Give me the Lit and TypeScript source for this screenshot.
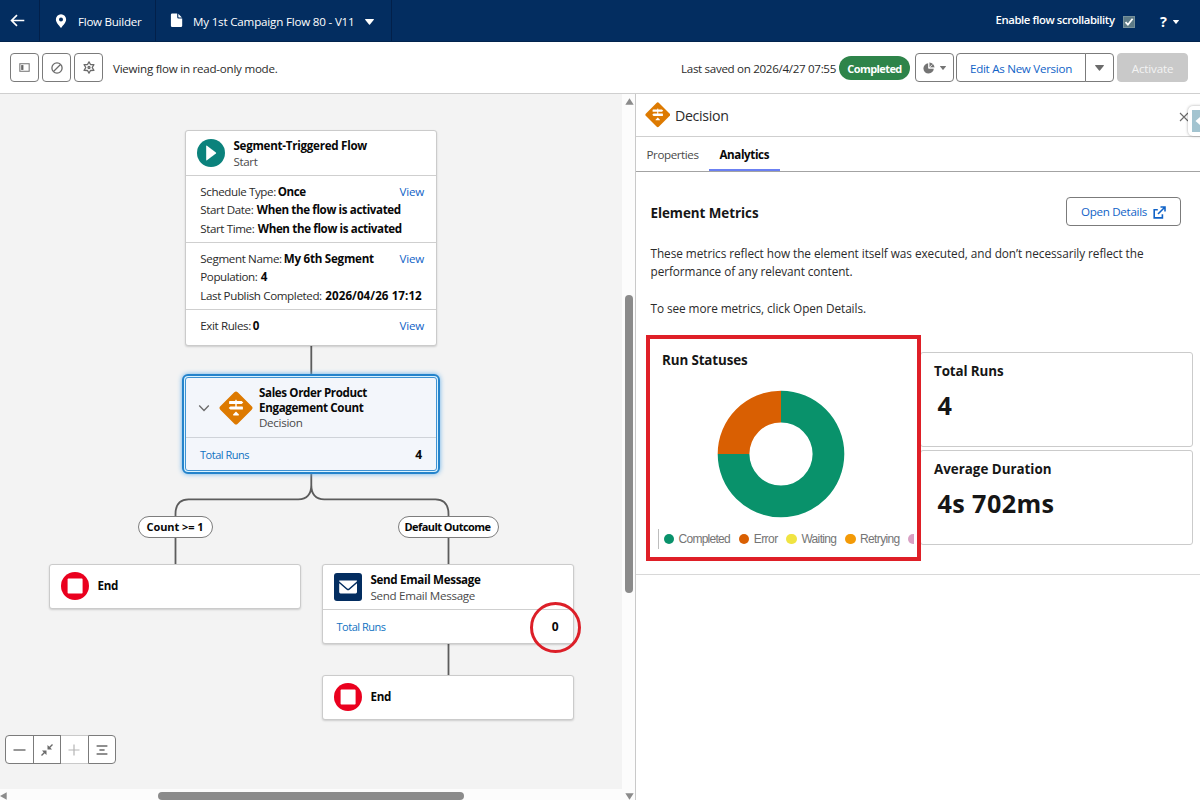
import { LitElement, html, css } from "lit";
import { customElement, property } from "lit/decorators.js";

/** A single line of text whose tracking is tuned so that it takes `w` pixels. */
@customElement("fit-text")
class FitText extends LitElement {
  static styles = css`
    :host { display: inline-block; white-space: pre; }
  `;
  @property() text = "";
  @property({ type: Number }) w = 0;
  render() {
    return html`<span>${this.text}</span>`;
  }
  updated() {
    const span = this.renderRoot.querySelector("span")!;
    span.style.letterSpacing = "0";
    const natural = span.getBoundingClientRect().width;
    span.style.letterSpacing = ((this.w - natural) / this.text.length).toFixed(3) + "px";
  }
}

const t = (text: string, w: number, cls = "") =>
  html`<fit-text class=${cls} .text=${text} .w=${w}></fit-text>`;

const decisionIcon = (size: number) => html`<svg width=${size} height=${size} viewBox="0 0 34 34">
  <rect x="4.7" y="4.7" width="24.6" height="24.6" rx="2.4" transform="rotate(45 17 17)" fill="#dd7a01" />
  <g fill="#fff">
    <rect x="16.3" y="8.8" width="1.4" height="8" />
    <path d="M10.800 9.900h11.800l1.700 1.600-1.700 1.600H10.800q-.7 0-.7-.7v-1.800q0-.7.7-.7z" />
    <path d="M23.200 15.400H11.400l-1.700 1.600 1.700 1.600h11.800q.7 0 .7-.7v-1.800q0-.7-.7-.7z" />
    <path d="M17 20.600l2.900 2.900q.3.900-.6.900h-4.600q-.9 0-.6-.9z" />
  </g>
</svg>`;

const endIcon = html`<svg width="28" height="28" viewBox="0 0 28 28">
  <circle cx="14" cy="14" r="14" fill="#ea001e" />
  <rect x="6.600" y="6.600" width="15" height="15" rx=".8" fill="#fff" />
</svg>`;

const caret = (w: number, h: number, color: string) => html`<svg width=${w} height=${h} viewBox="0 0 10 7" preserveAspectRatio="none">
  <path d="M.6 0h8.800q.8.200.4.800L5.500 6.500q-.5.600-1 0L.2.800Q-.2.200.6 0z" fill=${color} />
</svg>`;

const LEGEND: [string, number, string][] = [
  ["Completed", 51.500, "l1"],
  ["Error", 24, "l2"],
  ["Waiting", 35, "l3"],
  ["Retrying", 39.500, "l4"],
];

@customElement("app-root")
class AppRoot extends LitElement {
  static styles = css`
    :host {
      display: flex; flex-direction: column; width: 1200px; height: 800px; overflow: hidden;
      background: #fff; color: #2b2b2b; position: relative;
      font-family: "Open Sans", "Noto Sans", sans-serif; font-size: 11.6px; line-height: 18.5px;
    }
    * { box-sizing: border-box; }
    svg { display: block; flex: none; }
    b, .b { font-weight: 700; color: #080808; }

    .top { height: 42px; flex: none; display: flex; background: #032d60; color: #fff; border-bottom: 1px solid #02244d; }
    .top fit-text { padding-top: 3px; }
    .cell { display: flex; align-items: center; border-right: 1px solid #02204a; height: 41px; }
    .c1 { width: 40px; padding-left: 10px; }
    .c2 { width: 116px; padding-left: 15px; gap: 11px; }
    .c3 { width: 236px; padding-left: 14px; gap: 10px; }
    .c3 svg:last-child { margin: 2px 0 0 0.5px; }
    .right { margin-left: auto; display: flex; align-items: center; padding-right: 21px; }
    .scrolltxt { font-weight: 600; margin: 0 8px 4px 0; font-size: 11.3px; }
    .check { width: 12px; height: 12px; background: #5d7a86; border: 1px solid #76909a; margin-top: 3px; }
    .help { font-weight: 700; font-size: 14.5px; margin: 3px 6px 0 25.500px; line-height: 20px; }
    .right > svg { margin-top: 2px; }

    .bar { height: 52px; flex: none; display: flex; align-items: center; padding: 0 12px 0 10px; border-bottom: 1px solid #cfcfcf; }
    .bar fit-text { padding-top: 3px; }
    .btn { height: 29px; border: 1px solid #7b7b7b; border-radius: 4px; background: #fff; display: flex; align-items: center; justify-content: center; }
    .sq { width: 29px; margin-right: 3px; }
    .view { margin-left: 7px; }
    .saved { margin-left: auto; }
    .badge { height: 24px; width: 71px; margin: 0 5px 0 3px; border-radius: 12px; background: #2e844a; color: #fff; font-weight: 700; display: flex; align-items: center; justify-content: center; font-size: 11px; }
    .pie { width: 39px; gap: 5px; margin-right: 2px; }
    .edit { width: 130px; border-radius: 4px 0 0 4px; }
    .edit, .link { color: #1163c7; }
    .drop { width: 29px; border-radius: 0 4px 4px 0; margin-left: -1px; margin-right: 3px; }
    .drop svg { margin-top: 1px; }
    .act { width: 71px; background: #c9c9c9; border-color: #c9c9c9; color: #f3f3f3; }

    .main { flex: 1; display: flex; min-height: 0; }
    .left { width: 636px; display: grid; grid-template: 1fr 11px / 1fr 13px; border-right: 1px solid #c9c9c9; background: #fcfcfc; }
    .vbar { grid-row: 1 / 3; grid-column: 2; display: flex; flex-direction: column; align-items: center; padding: 4px 0 0 1px; }
    .vthumb { width: 8px; height: 298px; border-radius: 4px; background: #8b8b8b; margin-top: 190px; }
    .vbar svg:last-child { margin-top: auto; }
    .hbar { grid-row: 2; grid-column: 1; display: flex; align-items: flex-start; padding-top: 3px; }
    .hthumb { width: 306px; height: 8px; border-radius: 4px; background: #8b8b8b; margin-left: 151px; }
    .canvas { position: relative; background: #f3f3f3; overflow: hidden; grid-row: 1; grid-column: 1; }
    .wires { position: absolute; left: 0; top: 0; }
    .node { position: absolute; width: 252px; background: #fff; border: 1px solid #cbcbcb; border-radius: 3px; box-shadow: 0 1px 2px rgba(0,0,0,.16); }
    .n-start { left: 185px; top: 36px; height: 216px; }
    .n-end1 { left: 49px; top: 470px; height: 45px; }
    .n-mail { left: 322px; top: 470px; height: 80px; }
    .n-end2 { left: 322px; top: 581px; height: 45px; }
    .n-dec { left: 182px; top: 280px; width: 258px; height: 100px; padding: 1px; background: #d9f3ff; border: 2px solid #2483cb; border-radius: 6px; box-shadow: 0 0 5px #66b0ea; }
    .inner { height: 94px; background: #f3f6fb; border: 1px solid #3f92d2; border-radius: 3px; }
    .head { display: flex; align-items: center; padding-left: 11px; height: 45px; gap: 9px; border-bottom: 1px solid #cfcfcf; line-height: 16px; }
    .head .names { padding-top: 1px; margin-left: -.5px; }
    .head.solo { border: 0; height: 42px; gap: 8.500px; }
    .names { display: flex; flex-direction: column; }
    .sub { color: #4a4a4a; }
    .sec { padding: 6.500px 12px 4px 14.300px; border-bottom: 1px solid #cfcfcf; }
    .sec:last-child { border: 0; }
    .row { display: flex; height: 18.500px; }
    .g2 { margin-left: 2px; } .g3 { margin-left: 3.500px; }
    .row .link { margin-left: auto; }
    .dhead { display: flex; height: 60px; border-bottom: 1px solid #cfd3d9; line-height: 14.500px; align-items: center; padding-left: 12px; }
    .dhead .names { margin-left: 6px; padding-top: 2px; }
    .dhead .sub { line-height: 16px; }
    .dhead .chev { margin-right: 9px; }
    .runs { display: flex; justify-content: space-between; align-items: center; color: #0f72c2; font-size: 11px; }
    .runs b { font-size: 12px; }
    .r1 { height: 32px; padding: 2px 14px 0 14px; }
    .r2 { height: 34px; padding: 0 14.500px 0 13.500px; }
    .pill { position: absolute; top: 422px; height: 22px; border: 1px solid #7d7d7d; border-radius: 11px; background: #fff; display: flex; align-items: center; justify-content: center; font-weight: 700; color: #080808; font-size: 11px; padding: 1px 1px 0 0; }
    .p1 { left: 138px; width: 75px; } .p2 { left: 397.500px; width: 101px; }
    .ring { position: absolute; left: 530px; top: 508px; width: 51px; height: 51px; border: 3px solid #dc1f28; border-radius: 50%; }
    .zoom { position: absolute; left: 5px; top: 641px; display: flex; }
    .zoom .btn { width: 28.500px; margin-right: -1px; border-radius: 0; }
    .zoom .btn:first-child { border-radius: 4px 0 0 4px; }
    .zoom .btn:last-child { border-radius: 0 4px 4px 0; margin: 0; }
    .zoom .off { border-color: #c9c9c9 transparent #c9c9c9 transparent; }
    .zoom .over { z-index: 1; }

    .panel { flex: 1; min-width: 0; display: flex; flex-direction: column; }
    .ph { height: 43px; flex: none; display: flex; align-items: center; border-bottom: 1px solid #cfcfcf; padding: 0 0 0 8.500px; font-size: 14.200px; gap: 5px; }
    .ph fit-text { padding-top: 2px; }
    .ph .x { margin: 4px 11px 0 auto; }
    .tabs { height: 35px; flex: none; display: flex; border-bottom: 1.500px solid #a3a3a3; padding-left: 10.500px; color: #4a4a4a; }
    .tab { padding-top: 9px; }
    .tab.on { margin-left: 10px; padding: 9px 11px 0; width: 71px; border-bottom: 2px solid #6b80f2; color: #080808; font-weight: 700; }
    .body { height: 403px; border-bottom: 1.500px solid #d8d8d8; padding: 25px 7px 0 10px; }
    .bh { display: flex; justify-content: space-between; padding: 0 12px 0 4.500px; }
    .h { font-weight: 700; color: #161616; font-size: 13.400px; }
    .bh .h { padding-top: 6.500px; }
    .od { width: 115px; gap: 6px; padding-top: 1px; }
    .para { padding: 17.500px 4.500px 0; display: flex; flex-direction: column; font-size: 11.800px; }
    .gap { margin-top: 18.500px; }
    .grid { display: flex; margin-top: 17.500px; }
    .status { width: 275px; height: 226px; border: 4px solid #df1f27; padding: 12px 3px 0 8px; flex: none; display: flex; flex-direction: column; z-index: 1; background: #fff; }
    .status .h { padding-left: 4px; }
    .donut { margin: 20px 0 0 59px; }
    .legend { display: flex; align-items: center; margin-top: 11.500px; height: 20px; border-left: 1.500px solid #bdbdbd; overflow: hidden; font: 12px "Liberation Sans", sans-serif; color: #757575; padding-left: 4.500px; }
    .dot { width: 10.500px; height: 10.500px; border-radius: 50%; margin-right: 4.500px; flex: none; }
    .l1 { background: #09926b; } .l2 { background: #d95f02; } .l3 { background: #f0e442; } .l4 { background: #f39a07; } .l5 { background: #d9a0c3; }
    .legend fit-text { margin-right: 8.700px; flex: none; }
    .cards { flex: 1; padding-top: 17px; display: flex; flex-direction: column; gap: 3px; }
    .card { height: 95px; border: 1px solid #cbcbcb; border-radius: 3px; padding: 9px 13px; margin-left: -1px; display: flex; flex-direction: column; }
    .big { font-weight: 700; font-size: 25.200px; line-height: 32px; margin: 8px 0 0 3.500px; color: #161616; }
    .side { position: absolute; left: 1188px; top: 106px; width: 20px; height: 30px; background: #fff; border-radius: 5px; box-shadow: 0 0 3px rgba(0,0,0,.35); padding: 4px; }
    .side div { width: 16px; height: 22px; background: #a3c4d0; }
  `;

  row(a: string, aw: number, b: string, bw: number, link = false) {
    return html`<div class="row">${t(a, aw)}${t(b, bw, link ? "b g2" : "b g3")}${link ? t("View", 24.500, "link") : ""}</div>`;
  }

  render() {
    return html`
      <div class="top">
        <div class="cell c1"><svg width="15" height="14" viewBox="0 0 15 14"><path d="M14.300 6.500H2M7 1.200L1.600 6.500 7 11.800" fill="none" stroke="#fff" stroke-width="1.700" /></svg></div>
        <div class="cell c2"><svg width="12" height="14" viewBox="0 0 12 14"><path fill-rule="evenodd" d="M6 .2a5.100 5.100 0 0 1 5.100 5.200C11.100 8.600 7.700 11.300 6.500 13.500q-.5.600-1 0C4.300 11.300.9 8.600.9 5.400A5.100 5.100 0 0 1 6 .2zM6 3.400a2 2 0 1 0 0 4 2 2 0 0 0 0-4z" fill="#fff" /></svg>${t("Flow Builder", 63.500)}</div>
        <div class="cell c3"><svg width="13" height="15" viewBox="0 0 13 15"><path d="M2.200.5h5v3.700q0 1.300 1.300 1.300h3.700v7.200q0 1.300-1.300 1.300H2.200q-1.300 0-1.300-1.300V1.800Q.9.500 2.200.5zM8.300.8l3.600 3.600H9q-.7 0-.7-.7z" fill="#fff" /></svg>${t("My 1st Campaign Flow 80 - V11", 161.500)}${caret(9, 6, "#fff")}</div>
        <div class="right">
          ${t("Enable flow scrollability", 119, "scrolltxt")}
          <div class="check"><svg width="10" height="10" viewBox="0 0 10 10"><path d="M1.500 5.200l2.400 2.500 4.700-6" fill="none" stroke="#fff" stroke-width="1.800" /></svg></div>
          <span class="help">?</span>${caret(6, 4, "#fff")}
        </div>
      </div>

      <div class="bar">
        <div class="btn sq"><svg width="11" height="9" viewBox="0 0 12 10"><rect x=".8" y=".8" width="10.400" height="8.400" fill="none" stroke="#7b7b7b" stroke-width="1.200" /><rect x="2.300" y="2.300" width="2.500" height="5.400" fill="#666" /></svg></div>
        <div class="btn sq"><svg width="12" height="12" viewBox="0 0 12 12" fill="none" stroke="#6b6b6b" stroke-width="1.300"><circle cx="6" cy="6" r="5.100" /><path d="M2.500 9.500l7-7" /></svg></div>
        <div class="btn sq"><svg width="12" height="13" viewBox="0 0 12 13" fill="none" stroke="#6b6b6b" stroke-width="1.300" stroke-linejoin="round"><path d="M6 .9L7.500 3.500 10.900 3.600 9.200 6.500 10.900 9.400 7.500 9.500 6 12.100 4.500 9.500 1.100 9.400 2.800 6.500 1.100 3.600 4.500 3.500z" /><circle cx="6" cy="6.500" r="1" /></svg></div>
        ${t("Viewing flow in read-only mode.", 164.500, "view")}
        ${t("Last saved on 2026/4/27 07:55", 155, "saved")}
        <div class="badge">${t("Completed", 54.500)}</div>
        <div class="btn pie"><svg width="12" height="12" viewBox="0 0 12 12"><path d="M5.300 1.200v5.300h5.500A5.200 5.200 0 1 1 5.300 1.200z" fill="#747474" /><path d="M6.300.5q4.700.5 5.200 5H6.300z" fill="#747474" /><path d="M5.800 1v5.100h5.500M5.800 6.100l3.600-3.600" fill="none" stroke="#fff" stroke-width=".8" /></svg>${caret(6, 4, "#747474")}</div>
        <div class="btn edit">${t("Edit As New Version", 102)}</div>
        <div class="btn drop">${caret(9, 6, "#6b6b6b")}</div>
        <div class="btn act">${t("Activate", 41.500)}</div>
      </div>

      <div class="main">
        <div class="left">
          <div class="canvas">
            <svg class="wires" width="622" height="695" fill="none" stroke="#5c5c5c" stroke-width="1.800">
              <path d="M311.300 252v28M311.300 380v11q0 14-13 14.300H188.500q-13 .3-13 14.700v50M311.300 391q0 14 13 14.300H435.500q13 .3 13 14.700v50M448.500 550v31" />
            </svg>

            <div class="node n-start">
              <div class="head">
                <svg width="28" height="28" viewBox="0 0 28 28"><circle cx="14" cy="14" r="14" fill="#0b827c" /><path d="M9.200 7.200q0-1 .8-.5l8.900 6.700q.6.600 0 1.200L10 21.300q-.8.500-.8-.5z" fill="#fff" /></svg>
                <div class="names">${t("Segment-Triggered Flow", 133.500, "b")}${t("Start", 24, "sub")}</div>
              </div>
              <div class="sec">
                ${this.row("Schedule Type:", 75.500, "Once", 28, true)}
                ${this.row("Start Date:", 53, "When the flow is activated", 144)}
                ${this.row("Start Time:", 54, "When the flow is activated", 144)}
              </div>
              <div class="sec">
                ${this.row("Segment Name:", 81.500, "My 6th Segment", 90, true)}
                ${this.row("Population:", 57, "4", 7)}
                ${this.row("Last Publish Completed:", 121.500, "2026/04/26 17:12", 96.500)}
              </div>
              <div class="sec">${this.row("Exit Rules:", 50.500, "0", 7, true)}</div>
            </div>

            <div class="node n-dec">
              <div class="inner">
                <div class="dhead">
                  <svg class="chev" width="12" height="8" viewBox="0 0 12 8"><path d="M1.200 1.500L6 6.500l4.800-5" fill="none" stroke="#6b6b6b" stroke-width="1.300" /></svg>
                  ${decisionIcon(34)}
                  <div class="names">${t("Sales Order Product", 108, "b")}${t("Engagement Count", 104.500, "b")}${t("Decision", 43.500, "sub")}</div>
                </div>
                <div class="runs r1">${t("Total Runs", 49)}<b>4</b></div>
              </div>
            </div>

            <div class="pill p1">${t("Count >= 1", 57)}</div>
            <div class="pill p2">${t("Default Outcome", 86)}</div>

            <div class="node n-end1"><div class="head solo">${endIcon}${t("End", 20.500, "b")}</div></div>
            <div class="node n-mail">
              <div class="head">
                <svg width="28" height="28" viewBox="0 0 28 28"><rect width="28" height="28" rx="3" fill="#032d60" /><path d="M5.500 7.600h17.200q.6.300.1.800l-8 7q-.7.500-1.400 0L5.300 8.400q-.4-.5.200-.8z" fill="#fff" /><path d="M5.200 10.200l7.500 6.500q1.400 1 2.800 0l7.500-6.500v8.900q0 1.300-1.300 1.300H6.500q-1.300 0-1.300-1.300z" fill="#fff" /></svg>
                <div class="names">${t("Send Email Message", 110, "b")}${t("Send Email Message", 104.500, "sub")}</div>
              </div>
              <div class="runs r2">${t("Total Runs", 49)}<b>0</b></div>
            </div>
            <div class="node n-end2"><div class="head solo">${endIcon}${t("End", 20.500, "b")}</div></div>
            <div class="ring"></div>

            <div class="zoom">
              <div class="btn over"><svg width="13" height="4" viewBox="0 0 13 4"><path d="M.5 2h12" stroke="#6b6b6b" stroke-width="1.400" /></svg></div>
              <div class="btn over"><svg width="12" height="12" viewBox="0 0 12 12"><path d="M11.500.5L7.500 4.500M.5 11.500l4-4" stroke="#6b6b6b" stroke-width="1.400" /><path d="M6.500 1v4.500H11L9.200 3.500zM5.500 11V6.500H1L2.800 8.500z" fill="#6b6b6b" /></svg></div>
              <div class="btn off"><svg width="12" height="12" viewBox="0 0 12 12"><path d="M.5 6h11M6 .5v11" stroke="#b5b5b5" stroke-width="1.200" /></svg></div>
              <div class="btn over"><svg width="12" height="10" viewBox="0 0 12 10"><path d="M.6 1h10.800M3.400 5h5.200M.6 9h10.800" stroke="#6b6b6b" stroke-width="1.300" /></svg></div>
            </div>
          </div>
          <div class="vbar">
            <svg width="9" height="7" viewBox="0 0 9 7"><path d="M4.500.3L8.700 6.700H.3z" fill="#8b8b8b" /></svg>
            <div class="vthumb"></div>
            <svg width="9" height="7" viewBox="0 0 9 7"><path d="M4.500 6.700L8.700.3H.3z" fill="#8b8b8b" /></svg>
          </div>
          <div class="hbar">
            <svg width="7" height="8" viewBox="0 0 7 8"><path d="M0 4L6.700.2v7.600z" fill="#8b8b8b" /></svg>
            <div class="hthumb"></div>
          </div>
        </div>

        <div class="panel">
          <div class="ph">
            ${decisionIcon(25.500)}${t("Decision", 53.500)}
            <svg class="x" width="10" height="10" viewBox="0 0 10 10"><path d="M1 1l8 8M9 1L1 9" stroke="#6b6b6b" stroke-width="1.100" /></svg>
          </div>
          <div class="tabs">
            <div class="tab">${t("Properties", 52)}</div>
            <div class="tab on">${t("Analytics", 49.500)}</div>
          </div>
          <div class="body">
            <div class="bh">
              ${t("Element Metrics", 108, "h")}
              <div class="btn od link">${t("Open Details", 66)}<svg width="13" height="13" viewBox="0 0 13 13" fill="none" stroke="#1163c7" stroke-width="1.600"><path d="M4.800 3.700H1.200v8.200h8.200V8.300M5 8l6.800-6.800M7.500 1h4.500v4.500" /></svg></div>
            </div>
            <div class="para">
              ${t("These metrics reflect how the element itself was executed, and don’t necessarily reflect the", 493)}
              ${t("performance of any relevant content.", 202)}
              ${t("To see more metrics, click Open Details.", 215.500, "gap")}
            </div>
            <div class="grid">
              <div class="status">
                ${t("Run Statuses", 85.500, "h")}
                <svg class="donut" width="128" height="128" viewBox="-64 -64 128 128">
                  <path d="M0-63.300A63.300 63.300 0 1 1-63.300 0H-31.600A31.600 31.600 0 1 0 0-31.600z" fill="#09926b" />
                  <path d="M-63.300 0A63.300 63.300 0 0 1 0-63.300V-31.600A31.600 31.600 0 0 0-31.600 0z" fill="#d95f02" />
                </svg>
                <div class="legend">
                  ${LEGEND.map(([name, w, c]) => html`<span class="dot ${c}"></span>${t(name, w)}`)}
                  <span class="dot l5"></span>
                </div>
              </div>
              <div class="cards">
                <div class="card">${t("Total Runs", 69.500, "h")}<span class="big">4</span></div>
                <div class="card">${t("Average Duration", 117.500, "h")}${t("4s 702ms", 117, "big")}</div>
              </div>
            </div>
          </div>
        </div>
      </div>
      <div class="side"><div><svg width="8" height="22" viewBox="0 0 8 22"><path d="M3.500 11L9 6v10z" fill="#fff" /></svg></div></div>
    `;
  }
}
